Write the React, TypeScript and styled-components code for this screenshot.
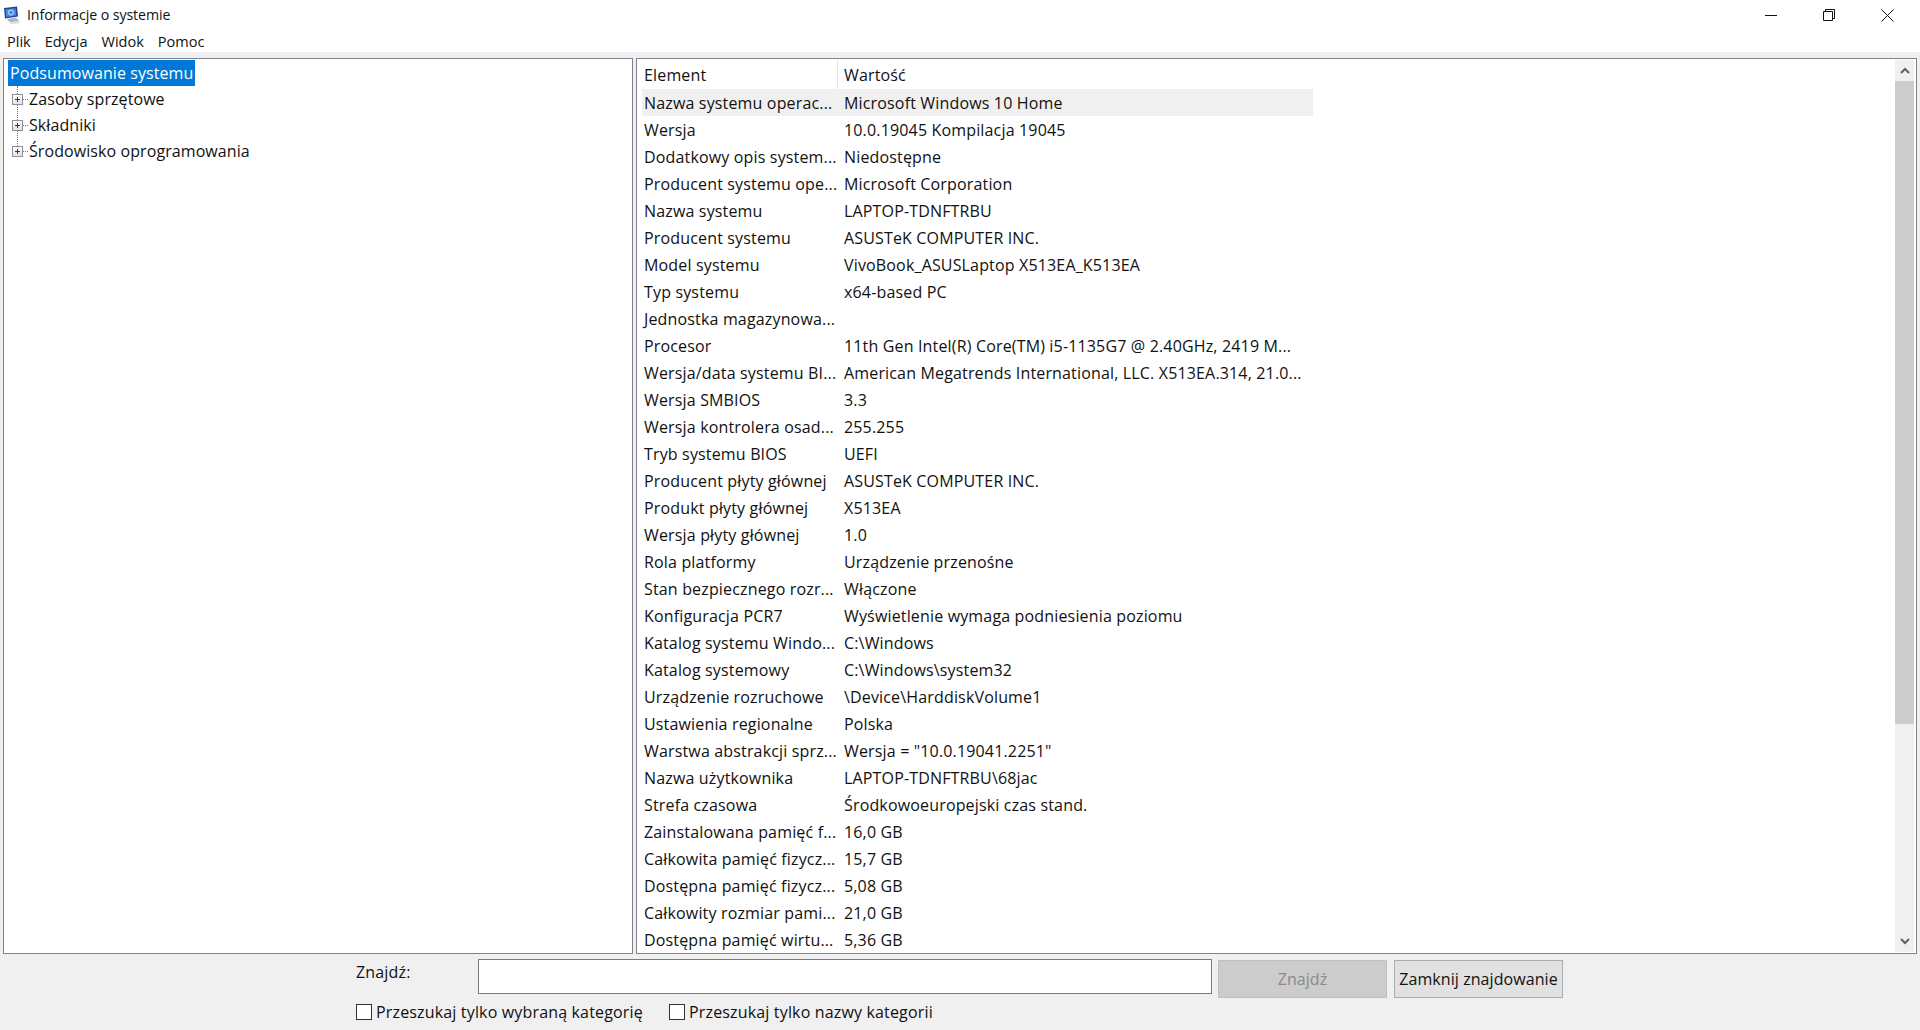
import React from "react";
import styled, { createGlobalStyle } from "styled-components";

const Global = createGlobalStyle`
  html, body { margin: 0; padding: 0; height: 100%; overflow: hidden; background: #f0f0f0; }
  * { box-sizing: border-box; }
  #root { height: 100%; }
`;
const Font = `"Open Sans", "Noto Sans", sans-serif`;
const Win = styled.div`
  width: 1920px; height: 1030px; display: flex; flex-direction: column;
  font-family: ${Font}; font-size: 16px; letter-spacing: 0.16px; color: #111; background: #f0f0f0;
`;
const TitleBar = styled.div`
  height: 30px; background: #fff; display: flex; align-items: center; padding: 0 3px 0 3px;
`;
const TitleText = styled.span`
  margin-left: 5px; font-size: 14.2px; letter-spacing: -0.1px; flex: 1; position: relative; top: -1px;
`;
const WinBtn = styled.div`
  width: 58.5px; height: 30px; display: flex; align-items: center; justify-content: center;
`;
const MenuBar = styled.div`
  height: 22px; background: #fff; display: flex; gap: 14px; padding-left: 7px; align-items: center; font-size: 14.5px; letter-spacing: 0;
`;
const Main = styled.div`
  flex: 1; display: flex; gap: 3px; padding: 6px 3px 0 3px; min-height: 0;
`;
const Panel = styled.div`
  border: 1px solid #82828f; background: #fff; height: 896px;
`;
const TreePanel = styled(Panel)`
  width: 630px; padding: 1px 0 0 4px; position: relative;
`;
const Selected = styled.div`
  display: inline-block; background: #0078d7; color: #fff; height: 26px; line-height: 26px; padding: 0 2px 0 2px; letter-spacing: 0.08px;
`;
const TreeRow = styled.div`
  height: 26px; display: flex; align-items: center; padding-left: 4px; letter-spacing: 0.08px;
`;
const Expander = styled.span`
  width: 11px; height: 11px; border: 1px solid #8f8f9d; background: linear-gradient(#fff, #e0e0e6);
  position: relative; display: block; flex: none; margin-top: 1px;
  &::before { content: ""; position: absolute; left: 2px; top: 4px; width: 5px; height: 1px; background: #2b3a55; }
  &::after { content: ""; position: absolute; left: 4px; top: 2px; width: 1px; height: 5px; background: #2b3a55; }
`;
const Stub = styled.span`
  width: 5px; border-top: 1px dotted #777; flex: none; margin-right: 1px; margin-top: 1px;
`;
const Dots = styled.div`
  position: absolute; left: 13px; top: 27px; height: 66px; border-left: 1px dotted #777;
`;
const ListPanel = styled(Panel)`
  flex: 1; display: flex; padding: 1px 2px 1px 5px;
`;
const Table = styled.div`
  flex: 1; min-width: 0;
`;
const Grid = styled.div`
  width: 671px; display: grid; grid-template-columns: 195px 476px;
`;
const Head = styled.div<{ $sep?: boolean }>`
  height: 29px; line-height: 30px; padding-left: ${(p) => (p.$sep ? "6px" : "2px")};
  ${(p) => (p.$sep ? "border-left: 1px solid #e5e5e5;" : "")}
`;
const Cell = styled.div<{ $hi?: boolean; $val?: boolean }>`
  height: 27px; line-height: 29px; white-space: nowrap; overflow: hidden;
  padding-left: ${(p) => (p.$val ? "7px" : "2px")};
  background: ${(p) => (p.$hi ? "#f0f0f0" : "transparent")};
`;
const Scroll = styled.div`
  width: 19px; background: #f0f0f0; display: flex; flex-direction: column; flex: none;
`;
const ScrollBtn = styled.div`
  height: 21px; display: flex; align-items: center; justify-content: center; flex: none;
`;
const Thumb = styled.div`
  height: 643px; background: #cdcdcd; flex: none;
`;
const Track = styled.div`
  flex: 1;
`;
const Footer = styled.div`
  height: 76px; padding: 5px 0 0 356px; display: flex; flex-direction: column; background: #f0f0f0;
`;
const FindRow = styled.div`
  display: flex; height: 40px; align-items: flex-start;
`;
const FindLabel = styled.span`
  width: 122px; line-height: 26px;
`;
const Input = styled.div`
  width: 734px; height: 35px; background: #fff; border: 1px solid #7a7a7a;
`;
const ButtonGroup = styled.div`
  display: flex; gap: 7px; margin: 1px 0 0 6px;
`;
const Button = styled.div<{ $off?: boolean }>`
  width: 169px; height: 38px; display: flex; align-items: center; justify-content: center; letter-spacing: 0.08px;
  background: ${(p) => (p.$off ? "#cccccc" : "#e1e1e1")};
  border: 1px solid ${(p) => (p.$off ? "#bfbfbf" : "#adadad")};
  color: ${(p) => (p.$off ? "#8a8a8a" : "#111")};
`;
const CheckRow = styled.div`
  display: flex; align-items: center; height: 26px;
`;
const CheckItem = styled.label<{ $w: number }>`
  display: flex; align-items: center; gap: 4px; width: ${(p) => p.$w}px;
`;
const Box = styled.span`
  width: 16px; height: 16px; background: #fff; border: 1px solid #333; display: block; flex: none;
`;

const rows: [string, string][] = [
  ["Nazwa systemu operac...", "Microsoft Windows 10 Home"],
  ["Wersja", "10.0.19045 Kompilacja 19045"],
  ["Dodatkowy opis system...", "Niedostępne"],
  ["Producent systemu ope...", "Microsoft Corporation"],
  ["Nazwa systemu", "LAPTOP-TDNFTRBU"],
  ["Producent systemu", "ASUSTeK COMPUTER INC."],
  ["Model systemu", "VivoBook_ASUSLaptop X513EA_K513EA"],
  ["Typ systemu", "x64-based PC"],
  ["Jednostka magazynowa...", ""],
  ["Procesor", "11th Gen Intel(R) Core(TM) i5-1135G7 @ 2.40GHz, 2419 M..."],
  ["Wersja/data systemu BI...", "American Megatrends International, LLC. X513EA.314, 21.0..."],
  ["Wersja SMBIOS", "3.3"],
  ["Wersja kontrolera osad...", "255.255"],
  ["Tryb systemu BIOS", "UEFI"],
  ["Producent płyty głównej", "ASUSTeK COMPUTER INC."],
  ["Produkt płyty głównej", "X513EA"],
  ["Wersja płyty głównej", "1.0"],
  ["Rola platformy", "Urządzenie przenośne"],
  ["Stan bezpiecznego rozr...", "Włączone"],
  ["Konfiguracja PCR7", "Wyświetlenie wymaga podniesienia poziomu"],
  ["Katalog systemu Windo...", "C:\\Windows"],
  ["Katalog systemowy", "C:\\Windows\\system32"],
  ["Urządzenie rozruchowe", "\\Device\\HarddiskVolume1"],
  ["Ustawienia regionalne", "Polska"],
  ["Warstwa abstrakcji sprz...", 'Wersja = "10.0.19041.2251"'],
  ["Nazwa użytkownika", "LAPTOP-TDNFTRBU\\68jac"],
  ["Strefa czasowa", "Środkowoeuropejski czas stand."],
  ["Zainstalowana pamięć f...", "16,0 GB"],
  ["Całkowita pamięć fizycz...", "15,7 GB"],
  ["Dostępna pamięć fizycz...", "5,08 GB"],
  ["Całkowity rozmiar pami...", "21,0 GB"],
  ["Dostępna pamięć wirtu...", "5,36 GB"],
];

export default function App() {
  return (
    <Win>
      <Global />
      <TitleBar>
        <svg width="19" height="19" viewBox="0 0 19 19">
          <path d="M1 2l13-1.500 1 10-13 2z" fill="#27408f" />
          <path d="M2.500 3.200l10-1 .8 7.300-10 1.400z" fill="#3f8ee6" />
          <circle cx="8" cy="6.500" r="2.500" fill="none" stroke="#cfe4fb" strokeWidth="1" />
          <path d="M4 13l9-1.500 3 3.500-9 1.500z" fill="#aeb4c2" />
          <path d="M7 16.500l9-1.500 1 2-9 1.500z" fill="#d9dce3" />
        </svg>
        <TitleText>Informacje o systemie</TitleText>
        <WinBtn>
          <svg width="12" height="12" viewBox="0 0 12 12"><path d="M0 6.500H12" stroke="#111" fill="none" /></svg>
        </WinBtn>
        <WinBtn>
          <svg width="12" height="12" viewBox="0 0 12 12"><path d="M.5 2.500h9v9h-9zM2.500 2.500V.5h9v9H9.500" stroke="#111" fill="none" /></svg>
        </WinBtn>
        <WinBtn>
          <svg width="13" height="13" viewBox="0 0 13 13"><path d="M.5.5l12 12M12.500.5l-12 12" stroke="#111" fill="none" /></svg>
        </WinBtn>
      </TitleBar>
      <MenuBar><span>Plik</span><span>Edycja</span><span>Widok</span><span>Pomoc</span></MenuBar>
      <Main>
        <TreePanel>
          <Dots />
          <Selected>Podsumowanie systemu</Selected>
          <TreeRow><Expander /><Stub /><span>Zasoby sprzętowe</span></TreeRow>
          <TreeRow><Expander /><Stub /><span>Składniki</span></TreeRow>
          <TreeRow><Expander /><Stub /><span>Środowisko oprogramowania</span></TreeRow>
        </TreePanel>
        <ListPanel>
          <Table>
            <Grid>
              <Head>Element</Head>
              <Head $sep>Wartość</Head>
              {rows.map(([a, b], i) => (
                <React.Fragment key={i}>
                  <Cell $hi={i === 0}>{a}</Cell>
                  <Cell $hi={i === 0} $val>{b}</Cell>
                </React.Fragment>
              ))}
            </Grid>
          </Table>
          <Scroll>
            <ScrollBtn>
              <svg width="10" height="7" viewBox="0 0 10 7"><path d="M1 6l4-4 4 4" stroke="#606060" strokeWidth="2" fill="none" /></svg>
            </ScrollBtn>
            <Thumb />
            <Track />
            <ScrollBtn>
              <svg width="10" height="7" viewBox="0 0 10 7"><path d="M1 1l4 4 4-4" stroke="#606060" strokeWidth="2" fill="none" /></svg>
            </ScrollBtn>
          </Scroll>
        </ListPanel>
      </Main>
      <Footer>
        <FindRow>
          <FindLabel>Znajdź:</FindLabel>
          <Input />
          <ButtonGroup>
            <Button $off>Znajdź</Button>
            <Button>Zamknij znajdowanie</Button>
          </ButtonGroup>
        </FindRow>
        <CheckRow>
          <CheckItem $w={313}><Box />Przeszukaj tylko wybraną kategorię</CheckItem>
          <CheckItem $w={320}><Box />Przeszukaj tylko nazwy kategorii</CheckItem>
        </CheckRow>
      </Footer>
    </Win>
  );
}
